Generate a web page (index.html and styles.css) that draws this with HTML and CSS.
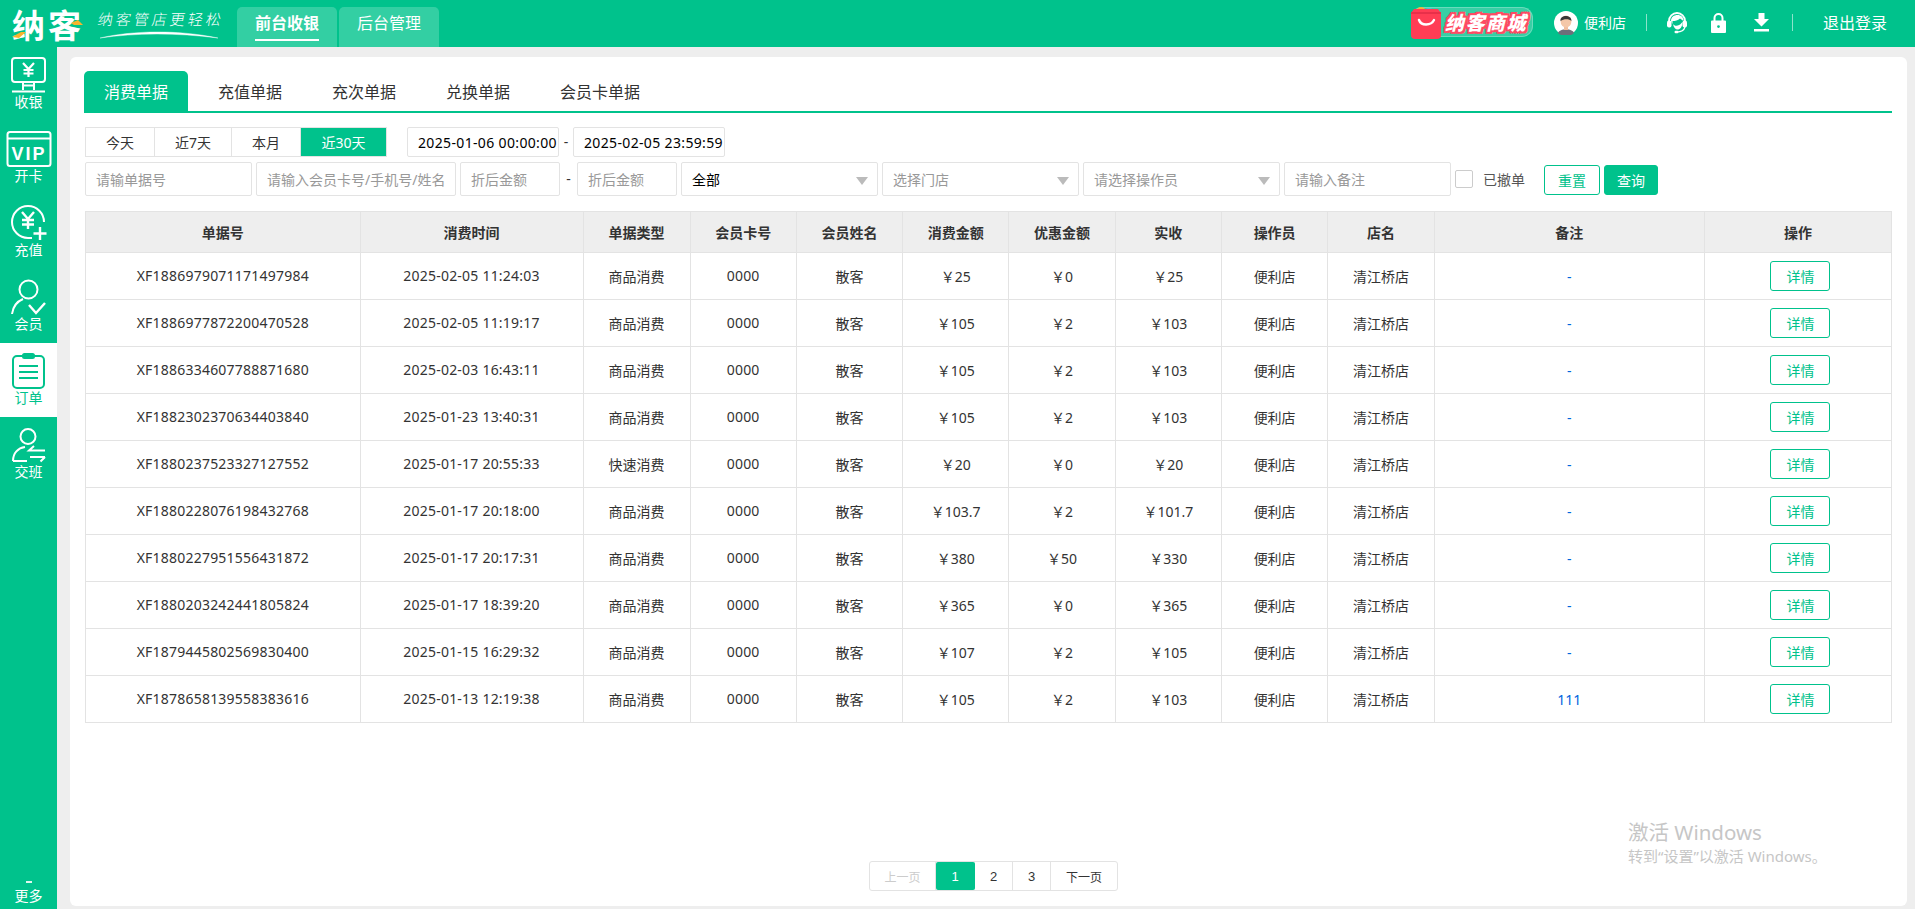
FILE: index.html
```html
<!DOCTYPE html>
<html lang="zh-CN">
<head>
<meta charset="utf-8">
<title>纳客 - 消费单据</title>
<link rel="stylesheet" href="styles.css">
</head>
<body>
<div class="app">
  <header class="topbar">
    <div class="logo">
      <span class="logo-mark">纳客</span>
      <svg class="logo-accent" width="72" height="30" viewBox="0 0 72 30"><path d="M0 28 L9 23 L14 23 L7 29 Z" fill="#f7b52c"/><path d="M59 14 L66 11 L71 16 L62 16 Z" fill="#f7b52c"/></svg>
      <div class="logo-slogan">
        <span class="slogan-text">纳客管店更轻松</span>
        <svg class="swoosh" width="120" height="9" viewBox="0 0 120 9"><path d="M0 8 C30 1 75 -1 118 8 C75 2.500 35 3 0 8 Z" fill="#fff" stroke="#fff" stroke-width=".4"/></svg>
      </div>
    </div>
    <nav class="topnav">
      <a class="topnav-item is-active"><span>前台收银</span></a>
      <a class="topnav-item"><span>后台管理</span></a>
    </nav>
    <div class="topbar-right">
      <div class="mall">
        <svg class="mall-bag" width="31" height="33" viewBox="0 0 31 33">
          <circle cx="10" cy="6" r="5" fill="#f2b33c"/><circle cx="18" cy="8" r="6" fill="#62b4e0"/>
          <path d="M3 3 H27 L30 7 V29 A4 4 0 0 1 26 33 H4 A4 4 0 0 1 0 29 V7 Z" fill="#ff3d55"/>
          <path d="M0 6 H30 V8 H0 Z" fill="#e8304a"/>
          <path d="M8 14 C10 20 20 20 23 14" fill="none" stroke="#fff" stroke-width="2.400" stroke-linecap="round"/>
        </svg>
        <span class="mall-text">纳客商城</span>
      </div>
      <div class="user">
        <svg width="24" height="24" viewBox="0 0 24 24">
          <circle cx="12" cy="12" r="12" fill="#fff"/>
          <path d="M4 22 C6 17 18 17 20 22 A12 12 0 0 1 4 22 Z" fill="#6d6f7a"/>
          <rect x="10" y="14" width="4" height="5" fill="#f0bd9d"/>
          <ellipse cx="12" cy="10.500" rx="5.400" ry="6" fill="#f4c7a8"/>
          <path d="M6.500 10 C5.500 4 17.500 3 17.500 10 C15 7.500 10 7.500 6.500 10 Z" fill="#3a3838"/>
        </svg>
        <span>便利店</span>
      </div>
      <i class="vline vline-first"></i>
      <svg class="ico-head" width="20" height="23" viewBox="0 0 20 23">
        <path d="M2 13 V10 A8 8 0 0 1 18 10 V13" fill="none" stroke="#fff" stroke-width="1.800"/>
        <path d="M4 10 C4 6 7 4 10.500 4 C14 4 16.500 6 16.500 10 L13 7.500 C11 9.500 8 10 5.500 10 L5.500 13 Z" fill="#fff"/>
        <path d="M6 13 C7.500 15.500 12 15.500 14.500 12 L15.500 11 C15.500 16 13 18.500 10.500 18.500 C8.500 18.500 6.500 16.500 6 13 Z" fill="#fff"/>
        <rect x="0" y="9.500" width="4.500" height="7" rx="2" fill="#fff"/>
        <rect x="15.500" y="9.500" width="4.500" height="7" rx="2" fill="#fff"/>
        <path d="M18 16 C17 19.500 14 21 10 21" fill="none" stroke="#fff" stroke-width="1.200"/>
        <rect x="7.500" y="19.800" width="4" height="2.400" rx="1.200" fill="#fff"/>
      </svg>
      <svg class="ico-lock" width="15" height="20" viewBox="0 0 15 20">
        <path d="M3.500 9 V5 A4 4 0 0 1 11.500 5 V9" fill="none" stroke="#fff" stroke-width="2"/>
        <path d="M1 7.500 H14 A1 1 0 0 1 15 8.500 V19 A1 1 0 0 1 14 20 H1 A1 1 0 0 1 0 19 V8.500 A1 1 0 0 1 1 7.500 Z M7.500 12.200 A1.400 1.400 0 1 0 7.500 15 A1.400 1.400 0 1 0 7.500 12.200 Z" fill="#fff" fill-rule="evenodd"/>
      </svg>
      <svg class="ico-down" width="15" height="19" viewBox="0 0 15 19">
        <path d="M4.500 0 H10.500 V6 H15 L7.500 13.500 L0 6 H4.500 Z" fill="#fff"/><rect x="0" y="16" width="15" height="2.500" fill="#fff"/>
      </svg>
      <i class="vline vline-second"></i>
      <span class="logout">退出登录</span>
    </div>
  </header>

  <div class="layout">
    <aside class="sidebar">
      <a class="side-item">
        <svg width="36" height="36" viewBox="0 0 36 36" fill="none" stroke="currentColor" stroke-width="2">
          <rect x="1" y="1" width="33" height="24" rx="3"/>
          <path d="M12 6 L17.500 12 L23 6 M17.500 12 V20 M12.500 13 H22.500 M12.500 16.500 H22.500" stroke-width="2.200"/>
          <path d="M12 26 V33 M23 26 V33 M11 28.500 H24 M1 34.500 H34"/>
        </svg>
        <span>收银</span>
      </a>
      <a class="side-item">
        <svg width="46" height="36" viewBox="0 0 46 36" fill="none" stroke="currentColor" stroke-width="2">
          <rect x="1.500" y="1" width="43" height="34" rx="2.500"/>
          <path d="M1.500 7.500 H44.500" stroke-width="2"/>
          <text x="23" y="29" text-anchor="middle" class="vip-text">VIP</text>
        </svg>
        <span>开卡</span>
      </a>
      <a class="side-item">
        <svg width="36" height="36" viewBox="0 0 36 36" fill="none" stroke="currentColor" stroke-width="2">
          <path d="M33 17 A16 16 0 1 0 17 33 H21"/>
          <path d="M11 7 L17 14 L23 7 M17 14 V24 M11 15 H23 M11 19.500 H23" stroke-width="2.400"/>
          <path d="M29 22 V35 M22.500 28.500 H35.500" stroke-width="2.400"/>
        </svg>
        <span>充值</span>
      </a>
      <a class="side-item">
        <svg width="36" height="36" viewBox="0 0 36 36" fill="none" stroke="currentColor" stroke-width="2">
          <circle cx="17.500" cy="10.500" r="9"/>
          <path d="M1 35 C2 27 6 22.500 12 20"/>
          <path d="M18 26 L25 34 L34 24" stroke-width="2.400"/>
        </svg>
        <span>会员</span>
      </a>
      <a class="side-item is-current">
        <svg width="36" height="36" viewBox="0 0 36 36" fill="none" stroke="currentColor" stroke-width="2">
          <rect x="2" y="3" width="31" height="32" rx="4"/>
          <rect x="12" y="1" width="11" height="4" rx="1.500" fill="currentColor"/>
          <path d="M8 13 H27 M8 19 H27 M8 25 H27" stroke-width="2.200"/>
        </svg>
        <span>订单</span>
      </a>
      <a class="side-item">
        <svg width="36" height="36" viewBox="0 0 36 36" fill="none" stroke="currentColor" stroke-width="2">
          <circle cx="17" cy="9.500" r="7.500"/>
          <path d="M2 34 C2 26 7 21 14 20 M2 34 H16"/>
          <path d="M23 19 L18 23.500 H34 M34 30 H19 M34 30 L29.500 34.500" stroke-width="2"/>
        </svg>
        <span>交班</span>
      </a>
      <a class="side-more"><i class="more-dots"></i><span>更多</span></a>
    </aside>

    <main class="main">
      <section class="panel">
        <div class="tabs">
          <a class="tab is-active">消费单据</a>
          <a class="tab">充值单据</a>
          <a class="tab">充次单据</a>
          <a class="tab">兑换单据</a>
          <a class="tab">会员卡单据</a>
        </div>

        <div class="filter-row filter-dates">
          <div class="quick">
            <a class="quick-item q-today">今天</a>
            <a class="quick-item q-week">近7天</a>
            <a class="quick-item q-month">本月</a>
            <a class="quick-item q-thirty is-active">近30天</a>
          </div>
          <input class="field date" value="2025-01-06 00:00:00">
          <span class="sep">-</span>
          <input class="field date" value="2025-02-05 23:59:59">
        </div>

        <div class="filter-row filter-search">
          <input class="field w-bill" placeholder="请输单据号">
          <input class="field w-member" placeholder="请输入会员卡号/手机号/姓名">
          <input class="field w-amount" placeholder="折后金额">
          <span class="sep sep-amount">-</span>
          <input class="field w-amount" placeholder="折后金额">
          <div class="field select is-value">全部</div>
          <div class="field select">选择门店</div>
          <div class="field select">请选择操作员</div>
          <input class="field w-remark" placeholder="请输入备注">
          <label class="check"><i class="check-box"></i>已撤单</label>
          <button class="btn btn-ghost">重置</button>
          <button class="btn btn-solid">查询</button>
        </div>

        <table class="grid">
          <colgroup>
            <col class="c-no"><col class="c-time"><col class="c-type"><col class="c-std"><col class="c-std"><col class="c-std"><col class="c-std"><col class="c-std"><col class="c-std"><col class="c-std"><col class="c-note"><col class="c-op">
          </colgroup>
          <thead>
            <tr><th>单据号</th><th>消费时间</th><th>单据类型</th><th>会员卡号</th><th>会员姓名</th><th>消费金额</th><th>优惠金额</th><th>实收</th><th>操作员</th><th>店名</th><th>备注</th><th>操作</th></tr>
          </thead>
          <tbody>
            <tr><td class="num">XF1886979071171497984</td><td class="num">2025-02-05 11:24:03</td><td>商品消费</td><td class="num">0000</td><td>散客</td><td>￥25</td><td>￥0</td><td>￥25</td><td>便利店</td><td>清江桥店</td><td class="note">-</td><td class="op"><button class="btn-detail">详情</button></td></tr>
            <tr><td class="num">XF1886977872200470528</td><td class="num">2025-02-05 11:19:17</td><td>商品消费</td><td class="num">0000</td><td>散客</td><td>￥105</td><td>￥2</td><td>￥103</td><td>便利店</td><td>清江桥店</td><td class="note">-</td><td class="op"><button class="btn-detail">详情</button></td></tr>
            <tr><td class="num">XF1886334607788871680</td><td class="num">2025-02-03 16:43:11</td><td>商品消费</td><td class="num">0000</td><td>散客</td><td>￥105</td><td>￥2</td><td>￥103</td><td>便利店</td><td>清江桥店</td><td class="note">-</td><td class="op"><button class="btn-detail">详情</button></td></tr>
            <tr><td class="num">XF1882302370634403840</td><td class="num">2025-01-23 13:40:31</td><td>商品消费</td><td class="num">0000</td><td>散客</td><td>￥105</td><td>￥2</td><td>￥103</td><td>便利店</td><td>清江桥店</td><td class="note">-</td><td class="op"><button class="btn-detail">详情</button></td></tr>
            <tr><td class="num">XF1880237523327127552</td><td class="num">2025-01-17 20:55:33</td><td>快速消费</td><td class="num">0000</td><td>散客</td><td>￥20</td><td>￥0</td><td>￥20</td><td>便利店</td><td>清江桥店</td><td class="note">-</td><td class="op"><button class="btn-detail">详情</button></td></tr>
            <tr><td class="num">XF1880228076198432768</td><td class="num">2025-01-17 20:18:00</td><td>商品消费</td><td class="num">0000</td><td>散客</td><td>￥103.7</td><td>￥2</td><td>￥101.7</td><td>便利店</td><td>清江桥店</td><td class="note">-</td><td class="op"><button class="btn-detail">详情</button></td></tr>
            <tr><td class="num">XF1880227951556431872</td><td class="num">2025-01-17 20:17:31</td><td>商品消费</td><td class="num">0000</td><td>散客</td><td>￥380</td><td>￥50</td><td>￥330</td><td>便利店</td><td>清江桥店</td><td class="note">-</td><td class="op"><button class="btn-detail">详情</button></td></tr>
            <tr><td class="num">XF1880203242441805824</td><td class="num">2025-01-17 18:39:20</td><td>商品消费</td><td class="num">0000</td><td>散客</td><td>￥365</td><td>￥0</td><td>￥365</td><td>便利店</td><td>清江桥店</td><td class="note">-</td><td class="op"><button class="btn-detail">详情</button></td></tr>
            <tr><td class="num">XF1879445802569830400</td><td class="num">2025-01-15 16:29:32</td><td>商品消费</td><td class="num">0000</td><td>散客</td><td>￥107</td><td>￥2</td><td>￥105</td><td>便利店</td><td>清江桥店</td><td class="note">-</td><td class="op"><button class="btn-detail">详情</button></td></tr>
            <tr><td class="num">XF1878658139558383616</td><td class="num">2025-01-13 12:19:38</td><td>商品消费</td><td class="num">0000</td><td>散客</td><td>￥105</td><td>￥2</td><td>￥103</td><td>便利店</td><td>清江桥店</td><td class="note">111</td><td class="op"><button class="btn-detail">详情</button></td></tr>
          </tbody>
        </table>

        <div class="pager">
          <a class="page page-nav is-disabled">上一页</a>
          <a class="page page-num is-active">1</a>
          <a class="page page-num">2</a>
          <a class="page page-num">3</a>
          <a class="page page-nav">下一页</a>
        </div>
      </section>
    </main>
  </div>

  <div class="watermark">
    <div class="wm-title">激活 Windows</div>
    <div class="wm-sub">转到“设置”以激活 Windows。</div>
  </div>
</div>
</body>
</html>
```
FILE: styles.css
```css
* { box-sizing: border-box; }
html, body { margin: 0; height: 100%; overflow: hidden; }
body {
  font-family: "Noto Sans", "Noto Sans CJK SC", sans-serif;
  font-size: 14px;
  color: #333;
  background: #eee;
}
a { color: inherit; text-decoration: none; }
.app { position: relative; height: 909px; display: flex; flex-direction: column; }

/* top bar */
.topbar { height: 47px; flex: none; background: #00c28c; color: #fff; display: flex; align-items: flex-end; }
.logo { position: relative; width: 237px; height: 47px; flex: none; }
.logo-mark { position: absolute; left: 12px; top: 4px; font: 700 33px/40px "Noto Sans CJK SC", sans-serif; letter-spacing: 3px; white-space: nowrap; }
.logo-accent { position: absolute; left: 12px; top: 9px; }
.logo-slogan { position: absolute; left: 98px; top: 9px; width: 125px; }
.slogan-text { display: block; font: 300 15px/20px "Noto Sans CJK SC", sans-serif; letter-spacing: 3px; white-space: nowrap; transform: skewX(-10deg); }
.swoosh { display: block; margin-top: 1px; margin-left: 2px; }
.topnav { display: flex; gap: 2px; height: 40px; }
.topnav-item { width: 100px; height: 40px; background: #33cfa3; border-radius: 5px 5px 0 0; font-size: 16px; display: flex; justify-content: center; }
.topnav-item span { height: 34px; line-height: 33px; }
.topnav-item.is-active span { font-weight: 700; border-bottom: 2px solid #fff; width: 64px; text-align: center; }
.topbar-right { margin-left: auto; height: 47px; position: relative; flex: 1; }
.mall { position: absolute; right: 382px; top: 7px; width: 122px; height: 30px; background: rgba(255,255,255,.22); border: 1px solid rgba(255,255,255,.25); border-radius: 11px; }
.mall-bag { position: absolute; left: -1px; top: -2px; }
.mall-text { position: absolute; left: 33px; top: 3px; color: #fff; font: italic 900 19px/22px "Noto Sans CJK SC", sans-serif; white-space: nowrap; letter-spacing: 1.500px; text-shadow: 2px 0 0 #ff4a63, -2px 0 0 #ff4a63, 0 2px 0 #ff4a63, 0 -2px 0 #ff4a63, 2px 2px 0 #ff4a63, -2px -2px 0 #ff4a63, 2px -2px 0 #ff4a63, -2px 2px 0 #ff4a63; }
.user { position: absolute; right: 289px; top: 10px; display: flex; align-items: center; gap: 6px; font-size: 14px; line-height: 26px; }
.vline { position: absolute; top: 14px; width: 1px; height: 17px; background: rgba(255,255,255,.55); }
.vline-first { right: 268px; }
.vline-second { right: 122px; }
.ico-head { position: absolute; right: 228px; top: 11px; }
.ico-lock { position: absolute; right: 189px; top: 13px; }
.ico-down { position: absolute; right: 146px; top: 13px; }
.logout { position: absolute; right: 28px; top: 11px; font-size: 16px; line-height: 24px; }

/* layout */
.layout { flex: 1; display: flex; min-height: 0; }
.sidebar { width: 57px; flex: none; background: #00c28c; color: #fff; display: flex; flex-direction: column; }
.side-item { height: 74px; display: flex; flex-direction: column; align-items: center; padding-top: 10px; line-height: 20px; }
.side-item svg { display: block; height: 36px; margin-bottom: -1px; }
.side-item.is-current { background: #fff; color: #00c28c; }
.vip-text { font: 700 18px "Liberation Sans", sans-serif; fill: currentColor; stroke: none; letter-spacing: 2px; }
.side-more { margin-top: auto; height: 28px; display: flex; flex-direction: column; align-items: center; line-height: 20px; }
.more-dots { width: 6px; height: 2px; background: #dff7ef; flex: none; margin-bottom: 3px; }
.main { flex: 1; min-width: 0; padding: 10px 8px 3px 13px; }
.panel { height: 100%; background: #fff; border-radius: 6px; padding: 14px 15px 0 14px; display: flex; flex-direction: column; }

/* tabs */
.tabs { display: flex; gap: 10px; height: 42px; flex: none; border-bottom: 2px solid #00c28c; }
.tab { padding: 0 20px; height: 40px; line-height: 42px; font-size: 16px; color: #333; border-radius: 5px 5px 0 0; }
.tab.is-active { background: #00c28c; color: #fff; }

/* filters */
.filter-row { display: flex; align-items: stretch; flex: none; margin-left: 1px; }
.filter-dates { margin-top: 14px; height: 30px; }
.filter-search { margin-top: 5px; height: 34px; gap: 4px; align-items: center; }
.quick { display: flex; height: 30px; border: 1px solid #e3e3e3; margin-right: 20px; width: 302px; }
.quick-item { display: flex; align-items: center; justify-content: center; border-right: 1px solid #e3e3e3; height: 28px; }
.q-today { width: 69px; }
.q-week { width: 77px; }
.q-month { width: 69px; }
.q-thirty { flex: 1; border-right: 0; }
.quick-item.is-active { background: #00c28c; color: #fff; }
.field { border: 1px solid #e3e3e3; border-radius: 2px; background: #fff; font: 14px "Noto Sans", "Noto Sans CJK SC", sans-serif; color: #000; outline: none; padding: 1px 10px 0; height: 34px; }
.field::placeholder { color: #999; opacity: 1; }
.date { width: 152px; height: 30px; padding: 0 0 0 10px; letter-spacing: .35px; }
.sep { width: 14px; text-align: center; line-height: 30px; color: #333; }
.sep-amount { width: 9px; }
.w-bill { width: 167px; }
.w-member { width: 200px; }
.w-amount { width: 100px; }
.w-remark { width: 167px; }
.select { width: 197px; line-height: 32px; color: #999; position: relative; }
.select::after { content: ""; position: absolute; right: 9px; top: 14px; border: 6px solid transparent; border-top: 8px solid #bbb; border-bottom: 0; }
.select.is-value { color: #000; }
.check { display: flex; align-items: center; gap: 10px; color: #555; font-size: 14px; width: 85px; }
.check-box { width: 18px; height: 18px; border: 1px solid #ccc; border-radius: 2px; background: #fff; flex: none; }
.btn { height: 30px; margin-top: 2px; border-radius: 3px; font: 14px "Noto Sans", "Noto Sans CJK SC", sans-serif; padding: 0; cursor: pointer; }
.btn-ghost { width: 56px; background: #fff; color: #00c28c; border: 1px solid #00c28c; }
.btn-solid { width: 54px; background: #00c28c; color: #fff; border: 1px solid #00c28c; }

/* table */
.grid { width: 1806px; table-layout: fixed; border-collapse: collapse; margin-top: 15px; margin-left: 1px; flex: none; }
.c-no { width: 274.500px; }
.c-time { width: 223px; }
.c-type { width: 107px; }
.c-std { width: 106.300px; }
.c-note { width: 270.400px; }
.c-op { width: 187px; }
.grid th, .grid td { border: 1px solid #e3e3e3; text-align: center; padding: 0; }
.grid th { background: #eee; height: 41px; font-weight: 700; color: #333; }
.grid td { height: 47px; color: #333; }
.grid td.num { letter-spacing: .22px; padding-bottom: 1px; }
.grid td.note { color: #0066dd; }
.grid td.op { padding-left: 5px; }
.btn-detail { width: 60px; height: 30px; background: #fff; border: 1px solid #00c28c; border-radius: 3px; color: #00c28c; font: 14px "Noto Sans", "Noto Sans CJK SC", sans-serif; padding: 0; display: block; margin: 0 auto; }

/* pager */
.pager { margin: auto 0 15px 785px; display: flex; height: 30px; border: 1px solid #e3e3e3; border-radius: 3px; width: 249px; flex: none; font-family: "Liberation Sans", "Noto Sans CJK SC", sans-serif; font-size: 12px; }
.page { display: flex; align-items: center; justify-content: center; border-right: 1px solid #e3e3e3; height: 28px; }
.page-nav { width: 67px; }
.page-nav:last-child { border-right: 0; flex: 1; }
.page-num { width: 38px; font-size: 13px; }
.page.is-disabled { color: #ccc; width: 66px; }
.page.is-active { background: #00c28c; color: #fff; border-radius: 2px; border-color: #00c28c; width: 39px; }

/* OS overlay */
.watermark { position: absolute; left: 1628px; top: 819px; color: #c6c6c6; pointer-events: none; }
.wm-title { font-size: 20.500px; line-height: 26px; }
.wm-sub { font-size: 15px; line-height: 22px; }
```
